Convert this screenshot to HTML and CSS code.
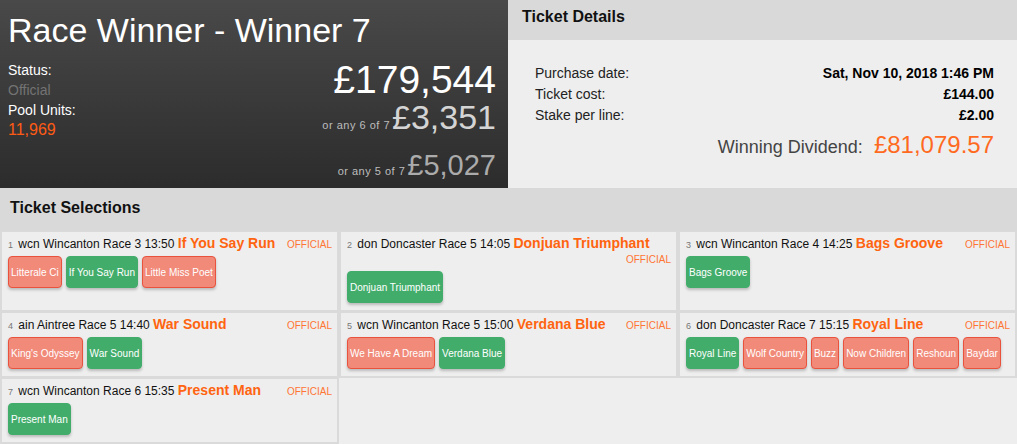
FILE: index.html
```html
<!DOCTYPE html>
<html lang="en">
<head>
<meta charset="utf-8">
<title>Race Winner - Winner 7</title>
<link rel="stylesheet" href="styles.css">
</head>
<body>
<div class="top">
  <section class="summary">
    <h1 class="summary-title">Race Winner - Winner 7</h1>
    <div class="summary-body">
      <div class="summary-meta">
        <div class="meta-label">Status:</div>
        <div class="meta-status">Official</div>
        <div class="meta-label">Pool Units:</div>
        <div class="meta-units">11,969</div>
      </div>
      <div class="payouts">
        <div class="payout payout-main"><span class="payout-amt">£179,544</span></div>
        <div class="payout payout-six"><span class="payout-note">or any 6 of 7</span><span class="payout-amt">£3,351</span></div>
        <div class="payout payout-five"><span class="payout-note">or any 5 of 7</span><span class="payout-amt">£5,027</span></div>
      </div>
    </div>
  </section>
  <section class="details">
    <h2 class="panel-head">Ticket Details</h2>
    <div class="details-body">
      <div class="detail-row"><span class="detail-label">Purchase date:</span><span class="detail-value">Sat, Nov 10, 2018 1:46 PM</span></div>
      <div class="detail-row"><span class="detail-label">Ticket cost:</span><span class="detail-value">£144.00</span></div>
      <div class="detail-row"><span class="detail-label">Stake per line:</span><span class="detail-value">£2.00</span></div>
      <div class="dividend"><span class="dividend-label">Winning Dividend:</span><span class="dividend-value">£81,079.57</span></div>
    </div>
  </section>
</div>

<section class="selections">
  <h2 class="selections-head">Ticket Selections</h2>
  <div class="sel-grid">
    <div class="sel-cell">
      <div class="sel-head"><span class="sel-title"><span class="sel-num">1</span> wcn Wincanton Race 3 13:50 <span class="sel-horse">If You Say Run</span></span><span class="sel-status">OFFICIAL</span></div>
      <div class="sel-picks"><span class="pick pick-lose">Litterale Ci</span><span class="pick pick-win">If You Say Run</span><span class="pick pick-lose">Little Miss Poet</span></div>
    </div>
    <div class="sel-cell">
      <div class="sel-head"><span class="sel-title"><span class="sel-num">2</span> don Doncaster Race 5 14:05 <span class="sel-horse">Donjuan Triumphant</span></span><span class="sel-status">OFFICIAL</span></div>
      <div class="sel-picks"><span class="pick pick-win">Donjuan Triumphant</span></div>
    </div>
    <div class="sel-cell">
      <div class="sel-head"><span class="sel-title"><span class="sel-num">3</span> wcn Wincanton Race 4 14:25 <span class="sel-horse">Bags Groove</span></span><span class="sel-status">OFFICIAL</span></div>
      <div class="sel-picks"><span class="pick pick-win">Bags Groove</span></div>
    </div>
    <div class="sel-cell">
      <div class="sel-head"><span class="sel-title"><span class="sel-num">4</span> ain Aintree Race 5 14:40 <span class="sel-horse">War Sound</span></span><span class="sel-status">OFFICIAL</span></div>
      <div class="sel-picks"><span class="pick pick-lose">King's Odyssey</span><span class="pick pick-win">War Sound</span></div>
    </div>
    <div class="sel-cell">
      <div class="sel-head"><span class="sel-title"><span class="sel-num">5</span> wcn Wincanton Race 5 15:00 <span class="sel-horse">Verdana Blue</span></span><span class="sel-status">OFFICIAL</span></div>
      <div class="sel-picks"><span class="pick pick-lose">We Have A Dream</span><span class="pick pick-win">Verdana Blue</span></div>
    </div>
    <div class="sel-cell">
      <div class="sel-head"><span class="sel-title"><span class="sel-num">6</span> don Doncaster Race 7 15:15 <span class="sel-horse">Royal Line</span></span><span class="sel-status">OFFICIAL</span></div>
      <div class="sel-picks"><span class="pick pick-win">Royal Line</span><span class="pick pick-lose">Wolf Country</span><span class="pick pick-lose">Buzz</span><span class="pick pick-lose">Now Children</span><span class="pick pick-lose">Reshoun</span><span class="pick pick-lose">Baydar</span></div>
    </div>
    <div class="sel-cell">
      <div class="sel-head"><span class="sel-title"><span class="sel-num">7</span> wcn Wincanton Race 6 15:35 <span class="sel-horse">Present Man</span></span><span class="sel-status">OFFICIAL</span></div>
      <div class="sel-picks"><span class="pick pick-win">Present Man</span></div>
    </div>
  </div>
</section>
</body>
</html>
```

FILE: styles.css
```css
* { box-sizing: border-box; }

html, body {
  margin: 0;
  padding: 0;
  background: #eeeeee;
  font-family: "Liberation Sans", Arial, sans-serif;
  color: #222;
}

/* ---------- top area ---------- */
.top {
  display: grid;
  grid-template-columns: 508px 1fr;
  height: 186px;
}

.summary {
  background: linear-gradient(#494949, #2c2c2c);
  color: #fff;
  padding: 0 12px 0 8px;
}

.summary-title {
  margin: 10px 0 0;
  font-size: 34px;
  line-height: 40px;
  font-weight: normal;
  white-space: nowrap;
}

.summary-body {
  display: flex;
  justify-content: space-between;
}

.summary-meta {
  margin-top: 10px;
  font-size: 14px;
  line-height: 20px;
}

.meta-label { color: #fff; }
.meta-status { color: #737373; }
.meta-units { color: #ff5b14; font-size: 16px; }

.payouts {
  margin-top: 10px;
  display: flex;
  flex-direction: column;
  align-items: flex-end;
}

.payout {
  display: flex;
  align-items: baseline;
  gap: 2px;
}

.payout-main { font-size: 39px; line-height: 39px; color: #fff; }
.payout-six { font-size: 34px; line-height: 36px; color: #d4d4d4; }
.payout-five { font-size: 29px; line-height: 33px; margin-top: 6px; color: #ababab; }

.payout-note {
  font-size: 11px;
  color: #bdbdbd;
  letter-spacing: 0.5px;
}

/* ---------- details ---------- */
.details {
  background: #eeeeee;
  display: flex;
  flex-direction: column;
}

.panel-head {
  margin: 0;
  height: 40px;
  padding: 6px 12px 0 14px;
  background: #d9d9d9;
  font-size: 16px;
  line-height: 22px;
  font-weight: bold;
  color: #111;
}

.details-body {
  padding: 23px 23px 0 27px;
}

.detail-row {
  display: flex;
  justify-content: space-between;
  font-size: 14px;
  line-height: 21px;
}

.detail-label { color: #222; }
.detail-value { color: #000; font-weight: bold; }

.dividend {
  margin-top: 4px;
  display: flex;
  justify-content: flex-end;
  align-items: baseline;
  gap: 11px;
  line-height: 30px;
}

.dividend-label { font-size: 18px; color: #444; }
.dividend-value { font-size: 24px; color: #ff6a1f; }

/* ---------- selections ---------- */
.selections-head {
  margin: 0;
  height: 45px;
  padding: 11px 10px 0;
  background: #d9d9d9;
  font-size: 16px;
  line-height: 22px;
  font-weight: bold;
  color: #111;
}

.sel-grid {
  display: grid;
  grid-template-columns: repeat(3, 1fr);
  background: #eeeeee;
}

.sel-cell {
  border: 2px solid #dadada;
  border-top-width: 1px;
  padding: 4px 5px 7px 5px;
  background: #eeeeee;
}

.sel-head {
  display: flex;
  flex-wrap: wrap;
  align-items: baseline;
  line-height: 14px;
  margin-bottom: 3px;
}

.sel-title {
  font-size: 12px;
  color: #111;
  white-space: nowrap;
}

.sel-num {
  font-size: 9px;
  color: #777;
  margin-left: 1px;
  margin-right: 2px;
}

.sel-horse {
  font-size: 14px;
  font-weight: bold;
  color: #ff6410;
}

.sel-status {
  margin-left: auto;
  padding-left: 6px;
  font-size: 10px;
  line-height: 16px;
  color: #ff7533;
}

.sel-picks {
  display: flex;
  gap: 4px;
  padding-left: 1px;
}

.pick {
  display: flex;
  align-items: center;
  height: 32px;
  padding: 0 2px;
  border: 1px solid transparent;
  border-radius: 4px;
  font-size: 10px;
  color: #fff;
  white-space: nowrap;
  box-shadow: 0 2px 3px rgba(0, 0, 0, 0.22);
}

.pick-win {
  background: #42ad6b;
  border-color: #42ad6b;
}

.pick-lose {
  background: #f18a79;
  border-color: #e9533e;
}
```
